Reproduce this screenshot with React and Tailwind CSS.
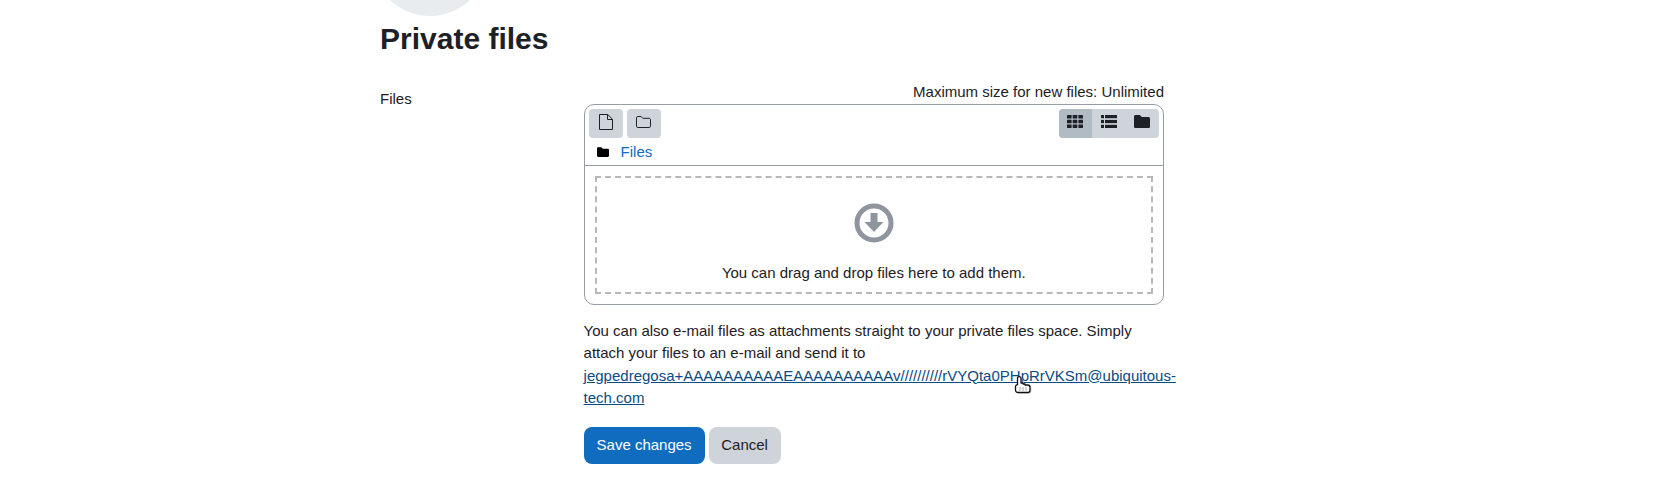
const Sans = "font-['Liberation_Sans',Arial,sans-serif]";

const FileIcon = () => (
  <svg viewBox="0 0 14 16" className="w-[14px] h-[16px]" fill="none" stroke="#1d2125" strokeWidth="1">
    <path d="M.5.5h8.2l4.8 4.8v10.2H.5z" strokeLinejoin="round" />
    <path d="M8.5.5v5h5" />
  </svg>
);

const FolderOutline = () => (
  <svg viewBox="0 0 15 12" className="w-[15px] h-[12px]" fill="none" stroke="#1d2125" strokeWidth="1">
    <path d="M1.8.5h3.4l1.6 1.8h6.4c.7 0 1.3.6 1.3 1.3v6.6c0 .7-.6 1.3-1.3 1.3H1.8c-.7 0-1.3-.6-1.3-1.3V1.8C.5 1.1 1.1.5 1.8.5z" strokeLinejoin="round" />
  </svg>
);

const FolderSolid = ({ size = "w-[16px] h-[13px]", fill = "#1d2125" }) => (
  <svg viewBox="0 0 16 13" className={size} fill={fill}>
    <path d="M1.6 0h4.2l2 2h6.6c.9 0 1.6.7 1.6 1.6v7.8c0 .9-.7 1.6-1.6 1.6H1.6C.7 13 0 12.3 0 11.4V1.6C0 .7.7 0 1.6 0z" />
  </svg>
);

const GridIcon = () => (
  <svg viewBox="0 0 16 13" className="w-[16px] h-[13px]" fill="#1d2125">
    <rect x="0" y="0" width="4.6" height="3.6" rx="0.4" />
    <rect x="5.7" y="0" width="4.6" height="3.6" rx="0.4" />
    <rect x="11.4" y="0" width="4.6" height="3.6" rx="0.4" />
    <rect x="0" y="4.7" width="4.6" height="3.6" rx="0.4" />
    <rect x="5.7" y="4.7" width="4.6" height="3.6" rx="0.4" />
    <rect x="11.4" y="4.7" width="4.6" height="3.6" rx="0.4" />
    <rect x="0" y="9.4" width="4.6" height="3.6" rx="0.4" />
    <rect x="5.7" y="9.4" width="4.6" height="3.6" rx="0.4" />
    <rect x="11.4" y="9.4" width="4.6" height="3.6" rx="0.4" />
  </svg>
);

const ListIcon = () => (
  <svg viewBox="0 0 16 13" className="w-[16px] h-[13px]" fill="#1d2125">
    <rect x="0" y="0" width="3" height="3.2" />
    <rect x="4" y="0" width="12" height="3.2" />
    <rect x="0" y="4.9" width="3" height="3.2" />
    <rect x="4" y="4.9" width="12" height="3.2" />
    <rect x="0" y="9.8" width="3" height="3.2" />
    <rect x="4" y="9.8" width="12" height="3.2" />
  </svg>
);

const DropIcon = () => (
  <svg viewBox="0 0 40 40" className="w-[40px] h-[40px]">
    <circle cx="20" cy="20" r="17" fill="none" stroke="#8f959e" strokeWidth="5" />
    <path d="M16.5 10h7v9h6L20 29l-9.5-10h6z" fill="#8f959e" />
  </svg>
);

const HandCursor = () => (
  <svg viewBox="0 0 18 18" className="w-[18px] h-[18px]">
    <path
      d="M4 2.5c0-1.8 3.5-1.8 3.5 0v5h2v1h2v1H14c1.5 0 2.5 1 2.5 2.2v3c0 1.2-1 2.3-2.3 2.3H4.5C3 17 2 16 2 14.5V11c0-1 .8-1.6 2-1.8z"
      fill="#bbb"
      opacity="0.6"
      transform="translate(1 .8)"
    />
    <path
      d="M3.5 2c0-1.8 3.5-1.8 3.5 0v5h2v1h2v1h2.5c1.5 0 2.5 1 2.5 2.2v3c0 1.2-1 2.3-2.3 2.3H4C2.5 16.5 1.5 15.5 1.5 14v-3.5c0-1 .8-1.6 2-1.8z"
      fill="#fff"
      stroke="#111"
      strokeWidth="1.3"
      strokeLinejoin="round"
    />
    <path d="M6 11.5v3M9 11.5v3M12 11.5v3" stroke="#555" strokeWidth="1" strokeDasharray="1 1" />
  </svg>
);

export default function App() {
  return (
    <div className={`${Sans} h-[488px] bg-white text-[15px] leading-[22.5px] text-[#1d2125] overflow-hidden`}>
      <div className="ml-[380px] w-[800px]">
        {/* avatar cut off by the top of the window */}
        <div className="h-[16px] overflow-hidden">
          <div className="ml-[-8px] mt-[-100px] w-[116px] h-[116px] rounded-full bg-[#e9ecef]" />
        </div>

        <h2 className="mt-[5px] text-[30px] leading-[36px] font-bold">Private files</h2>

        <div className="mt-[25px] flex">
          <div className="w-[203.6px] pt-[6px]">Files</div>

          <div className="w-[580.4px]">
            <div className="text-right h-[22px] leading-[20px]">Maximum size for new files: Unlimited</div>

            <div className="h-[201px] border border-[#979ca5] rounded-[10px] flex flex-col">
              <div className="flex justify-between px-[4px] pt-[4px]">
                <div className="flex gap-[4px]">
                  <div className="w-[34px] h-[29px] rounded-[4px] bg-[#ced4da] flex justify-center pt-[5px]">
                    <FileIcon />
                  </div>
                  <div className="w-[34px] h-[29px] rounded-[4px] bg-[#ced4da] flex justify-center pt-[7px]">
                    <FolderOutline />
                  </div>
                </div>
                <div className="flex h-[29px] rounded-[4px] bg-[#ced4da] overflow-hidden">
                  <div className="w-[33px] bg-[#b1bbc4] flex justify-center pt-[6px]">
                    <GridIcon />
                  </div>
                  <div className="w-[34px] flex justify-center pt-[6px]">
                    <ListIcon />
                  </div>
                  <div className="w-[33px] flex justify-center pt-[6px]">
                    <FolderSolid />
                  </div>
                </div>
              </div>

              <div className="h-[28px] flex items-center border-b border-[#979ca5] pl-[12px]">
                <FolderSolid size="w-[12px] h-[10px]" fill="#000" />
                <span className="ml-[12px] pt-[2px] text-[#0f6cbf]">Files</span>
              </div>

              <div className="flex-1 p-[10px]">
                <div className="h-full border-2 border-dashed border-[#b8b8b8] flex flex-col items-center pt-[25px]">
                  <DropIcon />
                  <div className="mt-[19px]">You can drag and drop files here to add them.</div>
                </div>
              </div>
            </div>

            <div className="mt-[14.5px] relative">
              <p>You can also e-mail files as attachments straight to your private files space. Simply</p>
              <p>attach your files to an e-mail and send it to</p>
              <a className="block w-[600px] text-[#0a4a85] underline break-words">
                jegpedregosa+AAAAAAAAAAEAAAAAAAAAAv//////////rVYQta0PHpRrVKSm@ubiquitous-
                <br />
                tech.com
              </a>
              <div className="absolute left-[430px] top-[56px]">
                <HandCursor />
              </div>
            </div>

            <div className="mt-[17.5px] flex gap-[4px]">
              <button className="h-[37px] w-[121px] rounded-[8px] bg-[#0f6cbf] text-white">Save changes</button>
              <button className="h-[37px] w-[72px] rounded-[8px] bg-[#ced4da] text-[#1d2125]">Cancel</button>
            </div>
          </div>
        </div>
      </div>
    </div>
  );
}
